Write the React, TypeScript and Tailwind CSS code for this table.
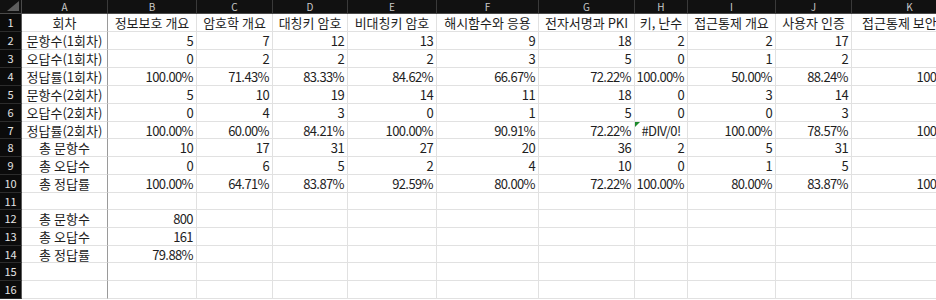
import React from "react";

const cols = ["A", "B", "C", "D", "E", "F", "G", "H", "I", "J", "K"];

type Row = { label: string; vals: string[] };

const rows: Row[] = [
  { label: "회차", vals: ["정보보호 개요", "암호학 개요", "대칭키 암호", "비대칭키 암호", "해시함수와 응용", "전자서명과 PKI", "키, 난수", "접근통제 개요", "사용자 인증", "접근통제 보안"] },
  { label: "문항수(1회차)", vals: ["5", "7", "12", "13", "9", "18", "2", "2", "17", ""] },
  { label: "오답수(1회차)", vals: ["0", "2", "2", "2", "3", "5", "0", "1", "2", ""] },
  { label: "정답률(1회차)", vals: ["100.00%", "71.43%", "83.33%", "84.62%", "66.67%", "72.22%", "100.00%", "50.00%", "88.24%", "100.00%"] },
  { label: "문항수(2회차)", vals: ["5", "10", "19", "14", "11", "18", "0", "3", "14", ""] },
  { label: "오답수(2회차)", vals: ["0", "4", "3", "0", "1", "5", "0", "0", "3", ""] },
  { label: "정답률(2회차)", vals: ["100.00%", "60.00%", "84.21%", "100.00%", "90.91%", "72.22%", "#DIV/0!", "100.00%", "78.57%", "100.00%"] },
  { label: "총 문항수", vals: ["10", "17", "31", "27", "20", "36", "2", "5", "31", ""] },
  { label: "총 오답수", vals: ["0", "6", "5", "2", "4", "10", "0", "1", "5", ""] },
  { label: "총 정답률", vals: ["100.00%", "64.71%", "83.87%", "92.59%", "80.00%", "72.22%", "100.00%", "80.00%", "83.87%", "100.00%"] },
  { label: "", vals: [] },
  { label: "총 문항수", vals: ["800"] },
  { label: "총 오답수", vals: ["161"] },
  { label: "총 정답률", vals: ["79.88%"] },
  { label: "", vals: [] },
  { label: "", vals: [] },
];

const font = { fontFamily: '"Noto Sans CJK KR", "Noto Sans", sans-serif' };

export default function App() {
  return (
    <div className="w-[936px] h-[300px] overflow-hidden bg-white">
      <div
        className="grid w-max grid-cols-[22px_86px_89px_76px_75px_89px_102px_96px_53px_88px_76px_116px] grid-rows-[14px_18px_18px_18px_18px_18px_18px_17px_18px_18px_18px_17px_18px_18px_17px_18px_18px_18px]"
        style={font}
      >
        {/* corner */}
        <div className="relative bg-[#111111] border-r border-b border-[#4a4a4a]">
          <svg className="absolute right-[2px] bottom-[2px]" width="12" height="10" viewBox="0 0 12 10">
            <polygon points="12,0 12,10 0,10" fill="#5e5e5e" />
          </svg>
        </div>
        {cols.map((c) => (
          <div
            key={c}
            className="bg-[#111111] border-r border-r-[#3a3a3a] border-b border-b-[#4a4a4a] flex items-center justify-center text-[10px] leading-none text-[#c9c9c9]"
          >
            {c}
          </div>
        ))}
        {rows.map((r, ri) => {
          const isHeader = ri === 0;
          const cells = [];
          cells.push(
            <div
              key={`n${ri}`}
              className="bg-[#0b0b0b] border-r border-r-[#5a5a5a] border-b border-b-[#2c2c2c] flex items-center justify-center text-[11px] leading-none text-[#e4e4e4]"
            >
              {ri + 1}
            </div>
          );
          cells.push(
            <div
              key={`a${ri}`}
              className="border-r border-r-[#9a9a9a] border-b border-b-[#e1e1e1] flex items-center justify-center text-[13px] leading-none text-[#1e1e1e] whitespace-nowrap overflow-hidden"
            >
              {r.label}
            </div>
          );
          for (let ci = 0; ci < 10; ci++) {
            const v = r.vals[ci] ?? "";
            const isErr = v.startsWith("#");
            const lastHeader = isHeader && ci === 9;
            const align = lastHeader
              ? "justify-start pl-[10px]"
              : isHeader || isErr
              ? "justify-center"
              : "justify-end pr-[3px]";
            cells.push(
              <div
                key={`c${ri}-${ci}`}
                className={
                  "relative border-r border-b border-[#e1e1e1] flex items-center text-[13px] leading-none text-[#1e1e1e] whitespace-nowrap " +
                  align
                }
              >
                {isErr && (
                  <svg className="absolute left-0 top-0" width="5" height="5" viewBox="0 0 5 5">
                    <polygon points="0,0 5,0 0,5" fill="#1d8a2c" />
                  </svg>
                )}
                <span className={isHeader ? "" : "tracking-[-0.6px]"}>{v}</span>
              </div>
            );
          }
          return <React.Fragment key={ri}>{cells}</React.Fragment>;
        })}
      </div>
    </div>
  );
}
